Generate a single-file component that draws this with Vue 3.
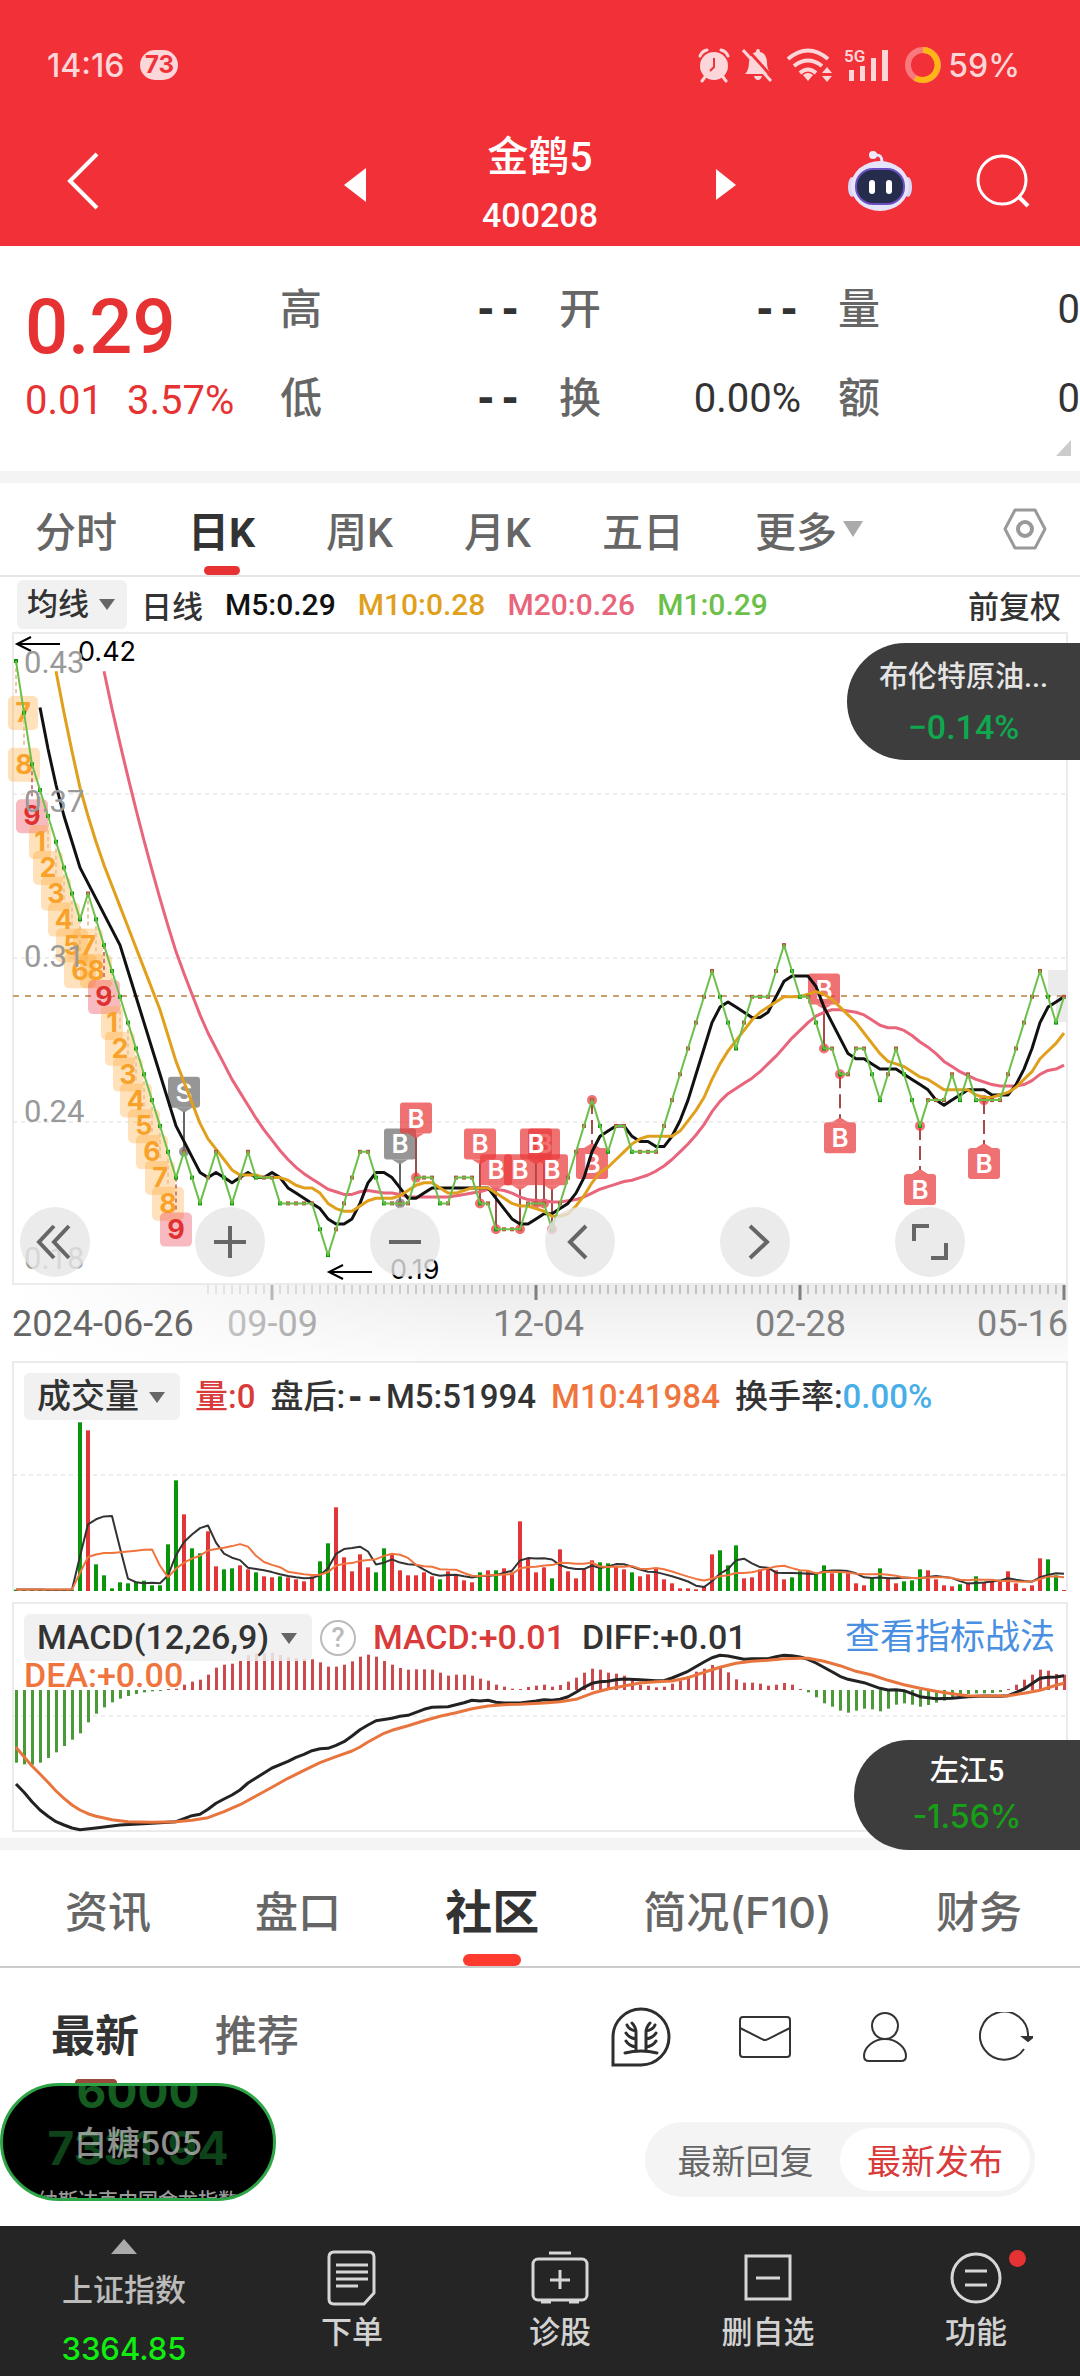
<script setup>
const range = (n) => Array.from({ length: n }, (_, i) => i)
const xAt = (i) => 16 + 8 * i

/* Closing prices in cents; the first eight precede the visible window. */
const LEAD = 8
const closes = [
  59, 56, 54, 52, 50, 48, 46, 44,
  42, 40, 38, 37, 36, 35, 34, 33, 32, 33, 32, 31, 30, 29, 28, 27, 26, 25, 24, 23, 22, 23, 22, 21, 22, 23, 22, 21,
  22, 23, 22, 22, 22, 21, 21, 21, 21, 21, 20, 19, 20, 21, 22, 23, 23, 22, 21, 21, 21, 21, 22, 22, 22, 21, 21, 22,
  22, 22, 21, 21, 20, 20, 20, 20, 21, 21, 21, 20, 21, 22, 23, 24, 25, 24, 23, 24, 24, 23, 23, 23, 23, 24, 25, 26,
  27, 28, 29, 30, 29, 28, 27, 28, 29, 29, 29, 30, 31, 30, 29, 29, 28, 27, 27, 26, 26, 27, 27, 26, 25, 26, 27, 26,
  25, 24, 25, 25, 25, 26, 25, 26, 25, 25, 25, 25, 26, 27, 28, 29, 30, 29, 28, 29,
]
const visible = closes.slice(LEAD)
const priceY = (p) => Math.round((29 + 25.83 * (42 - p)) * 10) / 10
const mean = (list, end, n) => list.slice(end - n + 1, end + 1).reduce((a, b) => a + b, 0) / n
const average = (n, from) =>
  range(visible.length).slice(from).map((i) => `${xAt(i)},${priceY(mean(closes, i + LEAD, n))}`).join(' ')
const m1 = average(1, 0)
const m5 = average(5, 3)
const m10 = average(10, 5)
const m20 = average(20, 11)
const dots = visible.map((p, i) => ({
  x: xAt(i) - 2,
  y: priceY(p) - 2,
  up: p >= closes[i + LEAD - 1],
}))

/* Nine-count tags under the falling leg. */
const tagWidth = { 1: 22, 2: 30, 3: 30, 7: 30 }
const tags = [7, 8, 9, 1, 2, 3, 4, 5, 6, 7, 8, 9, 1, 2, 3, 4, 5, 6, 7, 8, 9].map((n, i) => {
  const w = tagWidth[n] || 32
  return { n, w, x: Math.max(8, xAt(i) - w / 2), cx: xAt(i), py: priceY(visible[i]), y: priceY(visible[i]) + 35 }
})

const signals = [
  { i: 21, t: 'S', grey: true }, { i: 48, t: 'B', grey: true }, { i: 50, t: 'B' }, { i: 58, t: 'B' },
  { i: 60, t: 'B' }, { i: 63, t: 'B' }, { i: 66, t: 'B' }, { i: 65, t: 'B' }, { i: 67, t: 'B' },
  { i: 72, t: 'B', below: true }, { i: 101, t: 'B' }, { i: 103, t: 'B', below: true },
  { i: 113, t: 'B', below: true }, { i: 121, t: 'B', below: true },
].map((s) => {
  const x = xAt(s.i)
  const py = priceY(visible[s.i])
  const y = s.below ? py + 48 : py - 75
  const tail = s.below ? `${x - 8},${y} ${x},${y - 5} ${x + 8},${y}` : `${x - 8},${y + 31} ${x},${y + 36} ${x + 8},${y + 31}`
  return { ...s, x, py, y, tail, edge: s.below ? y - 4 : y + 35 }
})

const axis = [['0.43', 41], ['0.37', 180], ['0.31', 335], ['0.24', 490], ['0.18', 637]]
const ticks = range(108).map((k) => 208 + 8 * k)
const months = [272, 536, 800, 1064]

/* Turnover in thirds of a pixel; a negative entry is a falling day. */
const volume = [
  -4, -4, -4, -4, -4, -4, -4, -4, -506, 482, -80, -47, -8, -26, -23, -28, -31, -17, -17, -140, -332, 230, -128,
  -113, 179, 74, -65, -68, 77, 65, -56, 44, 41, -44, 41, 35, 29, 44, -89, -143, 251, 101, 59, 110, 71, -56, -128,
  109, 62, 47, 47, 56, 44, -35, 59, 50, 32, 26, -56, 62, -62, 68, 56, 209, 98, 56, 71, -38, 125, 59, 38, 68, 92,
  -86, -83, 74, 65, -56, 44, 50, 68, 35, 23, 8, 8, 5, 14, 110, -122, -77, -137, 38, 41, 65, 68, 62, 35, -41, -59,
  62, -56, -77, 53, -59, 53, 23, 17, -41, -68, 41, 23, -29, -32, -65, 62, 35, 17, 14, -20, 25, -44, 26, 29, 32,
  59, 23, 8, 17, 98, -95, -47, 3,
]
const volumeBars = volume.map((v, i) => ({ x: xAt(i) - 2, h: Math.abs(v) / 3, up: v > 0 }))
const volumeAverage = (n) => {
  const padded = [...Array(n).fill(5), ...volume.map(Math.abs)]
  return range(volume.length).map((i) => `${xAt(i)},${(230 - mean(padded, i + n, n) / 3).toFixed(1)}`).join(' ')
}
const v5 = volumeAverage(5)
const v10 = volumeAverage(10)

const macd = [
  -218, -223, -224, -218, -204, -187, -168, -149, -130, -97, -71, -52, -37, -26, -18, -12, -7, -4, -3, 3, 4, 16,
  25, 31, 46, 67, 76, 79, 88, 105, 109, 110, 112, 105, 98, 96, 94, 92, 83, 70, 70, 76, 86, 100, 106, 100, 87, 76,
  66, 61, 62, 62, 61, 52, 43, 46, 46, 43, 34, 28, 16, 10, 4, 3, 9, 13, 16, 10, 15, 25, 37, 52, 64, 61, 52, 49,
  43, 31, 16, 13, 8, 10, 19, 28, 42, 55, 64, 75, 66, 53, 32, 22, 22, 19, 13, 16, 21, 16, 3, -7, -22, -40, -50,
  -62, -68, -62, -56, -58, -64, -56, -44, -40, -44, -50, -45, -38, -32, -22, -16, -12, -10, -10, -9, -6, 3, 16,
  31, 46, 61, 58, 48, 46,
]
const macdBars = macd.map((v, i) => ({ x: xAt(i) - 1, y: v > 0 ? 88 - v / 3 : 88, h: Math.abs(v) / 3, up: v > 0 }))
const trace = (pairs) => pairs.map(([i, v]) => `${xAt(i)},${(88 - v / 3).toFixed(1)}`).join(' ')
const diff = trace([
  [0, -282], [1, -307], [2, -335], [3, -360], [4, -379], [5, -395], [6, -405], [7, -414], [8, -419], [10, -414],
  [13, -405], [17, -400], [19, -397], [20, -395], [22, -377], [23, -373], [24, -358], [25, -340], [26, -327],
  [27, -315], [28, -300], [29, -279], [31, -249], [32, -234], [34, -214], [35, -202], [36, -193], [37, -182],
  [38, -176], [39, -175], [40, -166], [41, -155], [42, -138], [43, -119], [44, -105], [45, -92], [47, -85],
  [48, -79], [49, -76], [51, -58], [52, -52], [54, -50], [56, -38], [57, -31], [58, -33], [59, -31], [60, -37],
  [61, -39], [63, -39], [65, -33], [66, -29], [67, -31], [68, -28], [69, -20], [70, -7], [71, 8], [72, 20],
  [73, 25], [74, 26], [75, 31], [76, 33], [78, 31], [80, 28], [81, 28], [82, 36], [84, 56], [86, 84], [87, 97],
  [88, 104], [89, 102], [91, 92], [92, 94], [94, 94], [95, 100], [96, 104], [97, 103], [98, 99], [99, 92],
  [100, 81], [102, 55], [103, 41], [104, 32], [106, 22], [108, 5], [109, 0], [110, 1], [111, -2], [113, -20],
  [115, -26], [117, -25], [119, -20], [121, -18], [123, -19], [124, -17], [126, 3], [128, 35], [129, 38],
  [130, 39], [131, 43],
])
const dea = trace([
  [0, -172], [1, -200], [2, -228], [3, -252], [4, -277], [5, -303], [6, -325], [7, -345], [8, -360], [9, -371],
  [10, -379], [12, -389], [14, -395], [17, -397], [20, -395], [22, -391], [24, -383], [26, -365], [28, -344],
  [30, -318], [32, -292], [34, -265], [36, -241], [38, -218], [40, -200], [42, -183], [43, -171], [44, -156],
  [46, -130], [47, -121], [49, -107], [51, -92], [53, -79], [55, -68], [57, -56], [59, -48], [61, -44], [63, -43],
  [66, -39], [68, -35], [70, -28], [72, -10], [74, 3], [76, 12], [78, 21], [80, 25], [82, 27], [84, 37], [86, 53],
  [88, 68], [90, 80], [92, 86], [94, 89], [96, 94], [98, 95], [99, 95], [101, 86], [103, 73], [105, 56],
  [107, 45], [109, 29], [111, 16], [113, 5], [115, -4], [117, -11], [119, -17], [122, -18], [124, -17],
  [126, -10], [128, -1], [130, 14], [131, 20],
])

const quote = [['高', '--'], ['开', '--'], ['量', '0'], ['低', '--'], ['换', '0.00%'], ['额', '0']]
const periods = ['分时', '日K', '周K', '月K', '五日']
const sections = ['资讯', '盘口', '社区', '简况(F10)', '财务']
const controls = [
  ['后退', 'M34 19 19 35 34 51M49 19 34 35 49 51'],
  ['放大', 'M19 35H51M35 19V51'],
  ['缩小', 'M19 35H51'],
  ['左移', 'M41 19 25 35 41 51'],
  ['右移', 'M30 19 47 35 30 51'],
  ['全屏', 'M19 34V19H34M51 36V51H36'],
]
</script>

<template>
  <main class="page">
    <header class="top">
      <div class="status">
        <span class="clock">14:16</span>
        <span class="count">73</span>
        <span class="system">
          <svg width="32" height="36" viewBox="0 0 32 36" fill="#fcd6d8">
            <circle cx="16" cy="19" r="14" />
            <path d="M7 30 4 34M25 30 28 34M2 9Q4 4 9 3M30 9Q28 4 23 3" stroke="#fcd6d8" stroke-width="3" fill="none" stroke-linecap="round" />
            <path d="M16 11V20L12 24" stroke="#f13037" stroke-width="2" fill="none" />
          </svg>
          <svg width="32" height="34" viewBox="0 0 32 34">
            <path d="M3 26Q7 22 7 14Q8 5 14 4Q14 1 16 1T18 4Q24 5 25 14Q25 22 29 26ZM12 28H20Q19 32 16 32T12 28Z" fill="#fcd6d8" />
            <path d="M4 0 33 32" stroke="#f13037" stroke-width="3" />
            <path d="M1 2 29 33" stroke="#fcd6d8" stroke-width="3" />
          </svg>
          <svg width="46" height="34" viewBox="0 0 46 34" fill="none" stroke="#fcd6d8" stroke-width="4">
            <path d="M2 11Q22-6 42 11M8 18Q22 7 36 18M14 25Q22 18 30 25" />
            <path d="M22 33 17 27Q22 23 27 27Z" fill="#fcd6d8" stroke="none" />
            <path d="M41 19 46 25H36ZM41 34 46 28H36Z" fill="#fcd6d8" stroke="none" />
          </svg>
          <svg width="48" height="36" viewBox="0 0 48 36" fill="#fcd6d8">
            <text x="0" y="15" class="network">5G</text>
            <path d="M5 23h5v11h-5zM16 19h5v15h-5zM27 11h5v23h-5zM38 3h6v31h-6z" />
          </svg>
          <svg width="38" height="38" viewBox="0 0 38 38" fill="none" stroke-width="6">
            <circle cx="19" cy="19" r="15" stroke="#f87a7f" />
            <path d="M19 4A15 15 0 1 1 11 32" stroke="#ffb515" />
          </svg>
          <span class="battery">59%</span>
        </span>
      </div>
      <nav class="nav">
        <button class="icon back" aria-label="返回">
          <svg width="34" height="58" viewBox="0 0 34 58"><path d="M31 2 4 29 31 56" fill="none" stroke="#fff" stroke-width="4" /></svg>
        </button>
        <div class="switcher">
          <button class="icon" aria-label="上一只"><svg width="24" height="36" viewBox="0 0 24 36"><path d="M23 0V34L1 17Z" fill="#fff" /></svg></button>
          <h1><span class="name">金鹤5</span><span class="code">400208</span></h1>
          <button class="icon" aria-label="下一只"><svg width="24" height="36" viewBox="0 0 24 36"><path d="M3 1V32L23 17Z" fill="#fff" /></svg></button>
        </div>
        <div class="tools">
          <button class="icon" aria-label="智能助手">
            <svg width="64" height="62" viewBox="0 0 64 62">
              <path d="M34 12Q34 4 27 5" fill="none" stroke="#e8e4fb" stroke-width="3" />
              <circle cx="25" cy="5" r="4" fill="#efeafd" />
              <ellipse cx="4" cy="37" rx="4" ry="10" fill="#d9d6f8" /><ellipse cx="60" cy="37" rx="4" ry="10" fill="#d9d6f8" />
              <ellipse cx="32" cy="36" rx="29" ry="25" fill="#e6e4fa" />
              <rect x="8" y="19" width="48" height="35" rx="17" fill="#262c4c" stroke="#6a4fc0" stroke-width="2" />
              <rect x="21" y="30" width="6" height="14" rx="3" fill="#fff" /><rect x="38" y="30" width="6" height="14" rx="3" fill="#fff" />
            </svg>
          </button>
          <button class="icon" aria-label="搜索">
            <svg width="54" height="54" viewBox="0 0 54 54" fill="none" stroke="#fff" stroke-width="3"><circle cx="26" cy="26" r="24" /><path d="M43 43 52 52" stroke-width="4" /></svg>
          </button>
        </div>
      </nav>
    </header>

    <section class="quote">
      <div class="price">
        <strong>0.29</strong>
        <p><span>0.01</span><span>3.57%</span></p>
      </div>
      <dl class="figures">
        <div v-for="([k, v], i) in quote" :key="i"><dt>{{ k }}</dt><dd :class="{ none: v === '--' }">{{ v }}</dd></div>
      </dl>
      <i class="corner"></i>
    </section>

    <nav class="periods">
      <button v-for="p in periods" :key="p" :class="{ on: p === '日K' }">{{ p }}</button>
      <button class="more">更多<i></i></button>
      <button class="gear" aria-label="设置">
        <svg width="44" height="42" viewBox="0 0 44 42" fill="none" stroke="#999" stroke-width="3"><path d="M12 2H32L42 21 32 40H12L2 21Z" stroke-linejoin="round" /><circle cx="22" cy="21" r="7" stroke-width="4" /></svg>
      </button>
    </nav>

    <div class="legend">
      <span class="pick"><select aria-label="指标"><option>均线</option></select></span>
      <span class="day">日线</span>
      <span class="k5">M5:0.29</span>
      <span class="k10">M10:0.28</span>
      <span class="k20">M20:0.26</span>
      <span class="k1">M1:0.29</span>
      <button class="adjust">前复权</button>
    </div>

    <section class="chart">
      <svg viewBox="0 0 1080 729">
        <defs>
          <linearGradient id="shade" x1="0" y1="0" x2="0" y2="1"><stop offset="0" stop-color="#ececec" /><stop offset="1" stop-color="#fbfbfb" /></linearGradient>
          <linearGradient id="veil"><stop offset="0" stop-color="#fff" /><stop offset="1" stop-color="#fff" stop-opacity="0" /></linearGradient>
        </defs>
        <rect x="12" y="653" width="1056" height="76" fill="url(#shade)" />
        <g class="ticks">
          <path v-for="x in ticks" :key="x" :d="`M${x} 653V662`" />
          <path v-for="x in months" :key="'m' + x" :d="`M${x} 653V668`" class="major" />
        </g>
        <g class="dates"><text x="227" y="704">09-09</text><text x="493" y="704">12-04</text><text x="755" y="704">02-28</text><text x="1068" y="704" text-anchor="end">05-16</text></g>
        <rect x="12" y="653" width="460" height="76" fill="url(#veil)" />
        <text x="12" y="704" class="first">2024-06-26</text>

        <rect x="1048" y="338" width="19" height="26" fill="#ebebeb" /><rect x="1056" y="364" width="11" height="26" fill="#ebebeb" />
        <path d="M13 652V1H1067V652Z" class="frame" />
        <path d="M13 162H1067M13 326H1067M13 490H1067" class="grid" />
        <path d="M13 364H1067" class="last" />

        <g v-for="(t, k) in tags" :key="'t' + k" :class="['tag', { nine: t.n === 9 }]">
          <path :d="`M${t.cx} ${t.py}V${t.y}`" />
          <rect :x="t.x" :y="t.y" :width="t.w" height="34" rx="5" />
          <text :x="t.x + t.w / 2" :y="t.y + 26">{{ t.n }}</text>
        </g>
        <g v-for="(s, k) in signals" :key="'s' + k" :class="['signal', { grey: s.grey, below: s.below }]">
          <path :d="`M${s.x} ${s.py}V${s.edge}`" />
          <circle :cx="s.x" :cy="s.py" r="5" />
          <rect :x="s.x - 16" :y="s.y" width="32" height="31" rx="3" />
          <polygon :points="s.tail" />
          <text :x="s.x" :y="s.y + 25">{{ s.t }}</text>
        </g>
        <g class="lines"><polyline :points="m20" stroke="#e8657b" /><polyline :points="m5" stroke="#111" /><polyline :points="m10" stroke="#e0a01c" /></g>
        <rect v-for="(d, k) in dots" :key="'d' + k" :x="d.x" :y="d.y" width="4" height="4" :fill="d.up ? '#b5503c' : '#0a960a'" />
        <g class="lines"><polyline :points="m1" stroke="#6cc04a" class="fine" /></g>
        <path d="M60 12H17M31 5 17 12 31 19M372 640H329M343 633 329 640 343 647" class="arrow" />
        <text x="78" y="29" class="peak">0.42</text><text x="390" y="647" class="peak">0.19</text>
        <text v-for="[t, y] in axis" :key="t" x="24" :y="y" class="axis">{{ t }}</text>
      </svg>
      <div class="controls">
        <button v-for="[label, d] in controls" :key="label" :aria-label="label">
          <svg width="70" height="70" viewBox="0 0 70 70"><path :d="d" /></svg>
        </button>
      </div>
      <a href="#" class="float oil"><span>布伦特原油...</span><b>−0.14%</b></a>
    </section>

    <section class="panel">
      <svg viewBox="0 0 1080 241">
        <path d="M13 230V1H1067V230" class="frame" />
        <path d="M13 114H1067" class="grid" />
        <rect v-for="(b, k) in volumeBars" :key="k" :x="b.x" :y="230 - b.h" width="4" :height="b.h" :fill="b.up ? '#e33535' : '#0a960a'" />
        <g class="lines"><polyline :points="v5" stroke="#333" class="fine" /><polyline :points="v10" stroke="#f0743e" class="fine" /></g>
      </svg>
      <div class="readout">
        <span class="pick wide"><select aria-label="副图一"><option>成交量</option></select></span>
        <span class="red">量:0</span>
        <span class="after">盘后:<em class="none">--</em></span><span>M5:51994</span>
        <span class="orange">M10:41984</span>
        <span>换手率:<span class="blue">0.00%</span></span>
      </div>
    </section>

    <section class="panel">
      <svg viewBox="0 0 1080 236">
        <path d="M13 229V1H1067V229Z" class="frame" />
        <path d="M13 114H1067" class="grid" />
        <rect v-for="(b, k) in macdBars" :key="k" :x="b.x" :y="b.y" width="3" :height="b.h" :fill="b.up ? '#c94b4e' : '#4a9a3a'" />
        <g class="lines"><polyline :points="diff" stroke="#222" /><polyline :points="dea" stroke="#e8743e" /></g>
      </svg>
      <div class="readout macd">
        <span class="pick wide"><select aria-label="副图二"><option>MACD(12,26,9)</option></select></span>
        <button class="help" aria-label="说明">?</button>
        <span class="red">MACD:+0.01</span>
        <span>DIFF:+0.01</span>
        <a href="#" class="tips">查看指标战法</a>
      </div>
      <span class="orange dea">DEA:+0.00</span>
      <a href="#" class="float left5"><span>左江5</span><b>-1.56%</b></a>
    </section>

    <nav class="sections">
      <a v-for="s in sections" :key="s" href="#" :class="{ on: s === '社区' }">{{ s }}</a>
    </nav>

    <section class="feed">
      <div class="feed-head">
        <a href="#" class="on">最新</a><a href="#">推荐</a>
        <span class="actions">
          <button class="icon" aria-label="社区"><svg width="60" height="60" viewBox="0 0 60 60" fill="none" stroke="#2e2e2e" stroke-width="3"><path d="M2 58V30A28 28 0 1 1 30 58Z" /><path d="M14 46Q30 42 46 46M25 44V26Q25 20 21 16M35 44V26Q35 20 39 16M25 24Q18 23 16 18M25 32Q18 31 15 26M25 40Q18 39 15 34M35 24Q42 23 44 18M35 32Q42 31 45 26M35 40Q42 39 45 34" stroke-linecap="round" /></svg></button>
          <button class="icon" aria-label="消息"><svg width="52" height="44" viewBox="0 0 52 44" fill="none" stroke="#333" stroke-width="2"><rect x="1" y="2" width="50" height="40" rx="3" /><path d="M1 13 23 24Q26 26 29 24L51 13" /></svg></button>
          <button class="icon" aria-label="我的"><svg width="52" height="50" viewBox="0 0 52 50" fill="none" stroke="#333" stroke-width="2"><circle cx="26" cy="14" r="13" /><path d="M26 27C38 27 47 36 47 44Q47 49 42 49H10Q5 49 5 44C5 36 14 27 26 27Z" /></svg></button>
          <button class="icon" aria-label="刷新"><svg width="54" height="50" viewBox="0 0 54 50" fill="none" stroke="#333" stroke-width="2"><path d="M45 37A24 24 0 1 1 49 25" /><path d="M44 25H54L49 29Z" fill="#333" /></svg></button>
        </span>
      </div>
      <div class="sort"><button>最新回复</button><button class="on">最新发布</button></div>
      <div class="ticker" aria-label="行情浮窗">
        <span class="t1">6000</span><span class="t2">7331.94</span><span class="t3">白糖505</span><span class="t4">纳斯达克中国金龙指数</span>
      </div>
    </section>

    <footer class="dock">
      <a href="#" class="index"><i></i><span>上证指数</span><b>3364.85</b></a>
      <a href="#"><svg width="52" height="56" viewBox="0 0 52 56"><path d="M8 2H43Q48 2 48 7V43L38 54H8Q3 54 3 49V7Q3 2 8 2ZM10 15H42M10 22H42M10 29H42M10 36H32" /></svg><span>下单</span></a>
      <a href="#"><svg width="58" height="56" viewBox="0 0 58 56"><rect x="2" y="9" width="54" height="41" rx="5" /><path d="M18 3H40M29 20V39M19 30H39M10 52H20M38 52H48" /></svg><span>诊股</span></a>
      <a href="#"><svg width="52" height="56" viewBox="0 0 52 56"><path d="M4 6H48V49H4ZM14 28H38" /></svg><span>删自选</span></a>
      <a href="#"><svg width="52" height="56" viewBox="0 0 52 56"><circle cx="26" cy="28" r="24" /><path d="M15 21H37M15 35H37" /></svg><span>功能</span><i class="dot"></i></a>
    </footer>
  </main>
</template>

<style>
body { margin: 0; background: #fff; }
</style>

<style scoped>
.page { font-family: Roboto, "Noto Sans CJK SC", sans-serif; font-weight: 500; color: #333; overflow: hidden; }
button, select { border: 0; padding: 0; background: none; font: inherit; color: inherit; }
a { color: inherit; text-decoration: none; }
h1, p, dl, dd { margin: 0; font-weight: 500; }
svg { display: block; }
.icon { display: block; }
.none { font-family: "DejaVu Sans Mono", monospace; font-style: normal; font-weight: 700; }

.top { background: #f13037; color: #fff; height: 246px; }
.status { display: flex; align-items: center; height: 86px; padding: 22px 60px 0 47px; font-family: Inter, sans-serif; font-size: 32px; color: #fcd6d8; }
.count { margin-left: 16px; width: 38px; line-height: 30px; border-radius: 15px; background: #fcd6d8; color: #f13037; font-size: 24px; font-weight: 700; text-align: center; }
.system { display: flex; align-items: center; gap: 12px; margin-left: auto; }
.network { font: 600 17px Roboto, sans-serif; }
.battery { margin-left: -6px; }
.nav { position: relative; display: flex; justify-content: space-between; align-items: center; height: 120px; padding: 13px 50px 0 66px; }
.switcher { position: absolute; left: 50%; top: 20px; width: 394px; margin-left: -197px; display: flex; justify-content: space-between; align-items: center; }
h1 { display: flex; flex-direction: column; align-items: center; line-height: 58px; }
.name { font-size: 41px; }
.code { font-size: 34px; }
.tools { display: flex; align-items: center; gap: 64px; }

.quote { position: relative; display: flex; height: 225px; border-bottom: 12px solid #f4f4f4; }
.price { width: 280px; padding: 31px 0 0 25px; box-sizing: border-box; color: #e63232; }
.price strong { display: block; font-size: 76px; font-weight: 500; line-height: 100px; }
.price p { display: flex; gap: 24px; font-size: 40px; line-height: 48px; font-weight: 400; }
.figures { flex: 1; display: grid; grid-template-columns: repeat(3, 1fr); column-gap: 37px; align-content: start; padding-top: 19px; font-size: 40px; line-height: 89px; }
.figures div { display: flex; justify-content: space-between; height: 89px; }
dd:not(.none) { font-weight: 400; }
dt { font-size: 42px; color: #666; }
.corner { position: absolute; right: 9px; bottom: 15px; border: solid transparent; border-width: 0 0 16px 15px; border-bottom-color: #ccc; }

.periods { display: flex; align-items: stretch; height: 92px; padding: 0 33px 0 35px; gap: 71px; border-bottom: 2px solid #e6e6e6; font-size: 41px; color: #666; }
.periods button { position: relative; }
.periods .on { font-weight: 700; color: #333; }
.periods .on::after { content: ""; position: absolute; left: 50%; bottom: 0; width: 36px; height: 9px; margin-left: -18px; border-radius: 5px; background: #e63232; }
.more { display: flex; align-items: center; gap: 6px; }
.more i { border: 10px solid transparent; border-top: 16px solid #aaa; border-bottom: 0; }
.gear { margin-left: auto; }

.legend { display: flex; align-items: center; height: 55px; padding: 0 19px 0 17px; gap: 22px; font-size: 30px; color: #333; }
.pick { position: relative; display: block; }
.pick select { display: block; appearance: none; height: 49px; padding: 0 38px 0 10px; border-radius: 6px; background: #f1f1f1; }
.pick::after { content: ""; position: absolute; right: 12px; top: 19px; border: 8px solid transparent; border-top: 11px solid #666; border-bottom: 0; }
.legend .day { margin-left: -8px; }
.k5 { color: #111; } .k10 { color: #e0a01c; } .k20 { color: #e8657b; } .k1 { color: #6cc04a; }
.adjust { margin-left: auto; }
.pick select, .day, .adjust { font-size: 31px; }

.chart, .panel { position: relative; }
.chart > svg, .panel > svg { width: 100%; height: auto; }
.frame { fill: none; stroke: #ebebeb; stroke-width: 2; }
.grid { stroke: #dcdcdc; stroke-dasharray: 4 4; }
.last { stroke: #c8a070; stroke-width: 2; stroke-dasharray: 6 6; }
.ticks path { stroke: #999; stroke-width: 1; }
.ticks .major { stroke: #808080; stroke-width: 3; }
.dates { font-size: 36px; font-weight: 400; fill: #808080; }
.first { font-size: 36px; font-weight: 400; fill: #666; }
.lines polyline { fill: none; stroke-width: 3; stroke-linejoin: round; }
.lines .fine { stroke-width: 2; }
.arrow { fill: none; stroke: #000; stroke-width: 2; }
.peak { font: 27px Inter, sans-serif; fill: #000; }
.axis { font-size: 31px; font-weight: 400; fill: #999; }
.tag path { stroke: #e8c99a; stroke-width: 2; stroke-dasharray: 4 3; }
.tag rect { fill: #ffa62b; opacity: 0.32; }
.tag text { font: 700 27px Inter, sans-serif; fill: #f9a22b; text-anchor: middle; }
.tag.nine path { stroke: #cf7d78; }
.tag.nine rect { fill: #e8283c; }
.tag.nine text { fill: #e03030; }
.signal path { stroke: #a34a4a; stroke-width: 2; }
.signal.below path { stroke-dasharray: 14 6; }
.signal circle, .signal rect, .signal polygon { fill: #ea3a3c; opacity: 0.72; }
.signal text { font: 600 26px Inter, sans-serif; fill: #fff; text-anchor: middle; }
.signal.grey path { stroke: #666; }
.signal.grey circle, .signal.grey rect, .signal.grey polygon { fill: #6e6e6e; }
.controls { position: absolute; left: 20px; top: 575px; display: flex; gap: 105px; }
.controls button { width: 70px; height: 70px; border-radius: 50%; background: rgba(230, 230, 230, 0.8); }
.controls path { fill: none; stroke: #666; stroke-width: 4; }
.float { position: absolute; right: 0; display: flex; flex-direction: column; align-items: center; box-sizing: border-box; background: rgba(45, 45, 45, 0.92); color: #fff; font-size: 29px; }
.float b { font-size: 34px; font-weight: 500; }
.oil { top: 11px; width: 233px; height: 117px; padding-top: 9px; border-radius: 59px 0 0 59px; line-height: 50px; color: #e4e4e4; }
.oil b { color: #0fa84f; }
.left5 { top: 138px; width: 226px; height: 110px; padding-top: 8px; border-radius: 55px 0 0 55px; line-height: 46px; z-index: 1; }
.left5 b { font-family: Inter, sans-serif; font-size: 32px; color: #17a017; }

.readout { position: absolute; top: 12px; left: 24px; right: 25px; display: flex; align-items: center; font-size: 33px; line-height: 47px; white-space: nowrap; gap: 15px; }
.macd { font-size: 34px; gap: 17px; }
.wide select { height: 47px; padding: 0 41px 0 13px; font-size: 34px; background: rgba(238, 238, 238, 0.85); }
.macd .wide select { padding-right: 42px; }
.wide::after { right: 15px; }
.readout .red { color: #d93a3a; }
.orange { color: #f0743e; }
.blue { color: #48aee8; }
.after { margin-right: -14px; }
.help { width: 36px; height: 36px; margin-left: -9px; border: 2px solid #bbb; border-radius: 50%; color: #bbb; font-size: 27px; line-height: 30px; }
.tips { margin-left: auto; color: #4a90e2; font-weight: 400; font-size: 35px; }
.dea { position: absolute; left: 24px; top: 51px; font-size: 34px; line-height: 44px; }

.sections { display: flex; justify-content: space-between; align-items: stretch; height: 116px; padding: 0 58px 0 65px; border-top: 12px solid #f4f4f4; border-bottom: 2px solid #ccc; font-family: Inter, "Noto Sans CJK SC", sans-serif; font-size: 43px; line-height: 124px; color: #666; }
.sections .on { position: relative; font-size: 47px; font-weight: 700; color: #333; }
.sections .on::after { content: ""; position: absolute; left: 50%; bottom: 0; width: 58px; height: 12px; margin-left: -29px; border-radius: 6px; background: #ff3b30; }

.feed { position: relative; height: 258px; }
.feed-head { display: flex; align-items: center; height: 116px; padding: 22px 47px 0 51px; box-sizing: border-box; font-size: 42px; line-height: 92px; gap: 76px; color: #666; }
.feed-head .on { position: relative; font-size: 44px; font-weight: 700; color: #333; }
.feed-head .on::after { content: ""; position: absolute; left: 24px; bottom: -4px; width: 42px; height: 8px; border-radius: 4px; background: #9a4a3a; }
.actions { display: flex; align-items: center; gap: 68px; margin-left: auto; }
.sort { display: flex; width: 390px; height: 75px; margin: 38px 45px 0 auto; padding: 6px 5px 6px 6px; box-sizing: border-box; border-radius: 38px; background: #f4f4f4; font-size: 34px; font-weight: 400; color: #666; }
.sort button { flex: 1; white-space: nowrap; }
.sort .on { flex: none; width: 190px; border-radius: 32px; background: #fff; color: #d93a3a; }
.ticker { position: absolute; left: 0; top: 115px; width: 276px; height: 118px; box-sizing: border-box; border: 3px solid #2da546; border-radius: 60px; background: #000; overflow: hidden; font-family: Inter, "Noto Sans CJK SC", sans-serif; }
.ticker span { position: absolute; left: 0; right: 0; text-align: center; white-space: nowrap; }
.t1 { top: -20px; font-size: 46px; line-height: 50px; font-weight: 700; color: #145c20; }
.t2 { top: 37px; font-size: 46px; line-height: 50px; font-weight: 700; color: #0e4218; }
.t3 { top: 35px; font-size: 33px; line-height: 44px; color: rgba(190, 190, 190, 0.75); }
.t4 { top: 100px; font-size: 20px; line-height: 30px; color: #999; }

.dock { display: flex; height: 150px; background: #252525; color: #d2d2d2; font-size: 31px; line-height: 42px; }
.dock a { position: relative; flex: 208; display: flex; flex-direction: column; align-items: center; padding-top: 24px; gap: 6px; }
.dock svg { fill: none; stroke: #d6d6d6; stroke-width: 3; }
.dock .index { flex: 248; padding-top: 13px; gap: 16px; color: #bbb; }
.index i { border: 13px solid transparent; border-top: 0; border-bottom: 15px solid #aaa; }
.index b { font: 500 31px/42px Inter, sans-serif; color: #10ee10; }
.dot { position: absolute; left: 137px; top: 24px; width: 17px; height: 17px; border-radius: 50%; background: #e63232; }
</style>
